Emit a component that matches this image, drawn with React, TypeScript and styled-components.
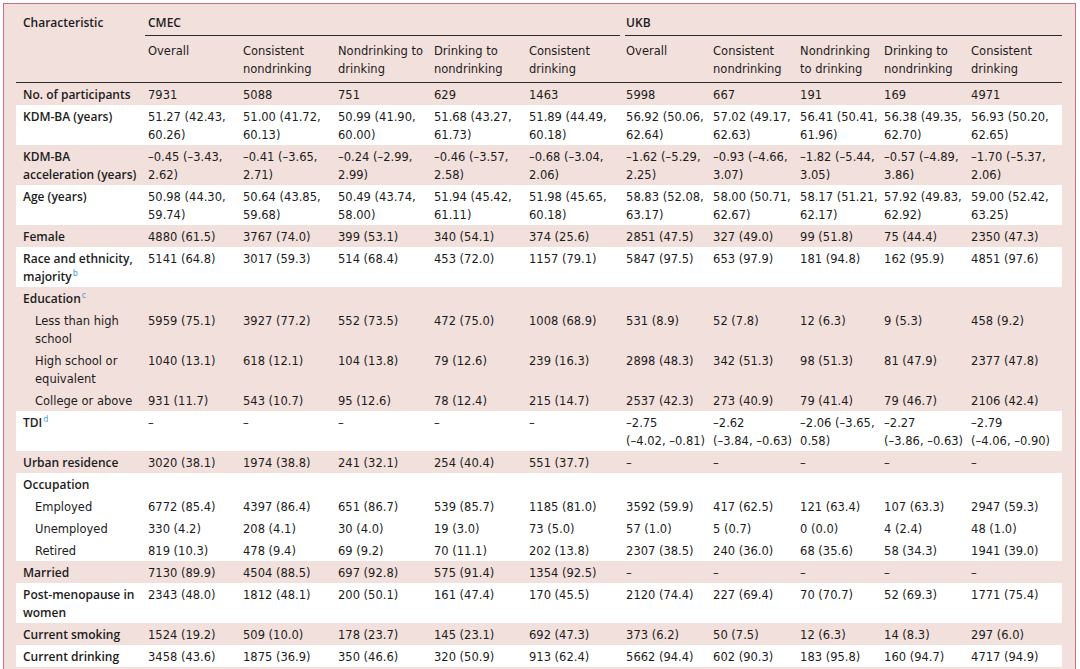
import React from "react";
import styled, { createGlobalStyle } from "styled-components";

const PINK = "#f2e0dc";
const INK = "#1c1c1c";
const RULE = "#2b2b2b";

const GlobalStyle = createGlobalStyle`
  html, body { margin: 0; padding: 0; background: #ffffff; }
  body {
    font-family: "DejaVu Sans", "Liberation Sans", sans-serif;
    color: ${INK};
  }
`;

const Frame = styled.div`
  box-sizing: border-box;
  margin: 3px 4px 0 3px;
  min-height: calc(100vh - 3px);
  padding: 5px 13px 0 12px;
  background: ${PINK};
  border: 1px solid #c9707f;
  border-bottom: none;
`;

const Table = styled.table`
  width: 1046px;
  table-layout: fixed;
  border-collapse: separate;
  border-spacing: 0;
  font-family: "DejaVu Sans", "Liberation Sans", sans-serif;
  font-size: 11.5px;
  line-height: 18px;
  color: ${INK};
`;

const Col = styled.col<{ $w: number }>`
  width: ${(p) => p.$w}px;
`;

const CharHead = styled.th`
  text-align: left;
  vertical-align: top;
  padding: 5px 0 4px 7px;
  font: 600 12px/18px "Open Sans", "DejaVu Sans", sans-serif;
  border-bottom: 1.5px solid ${RULE};
`;

const GroupHead = styled.th<{ $gap: number }>`
  text-align: left;
  vertical-align: top;
  padding: 5px 0 0 ${(p) => p.$gap}px;
  font: 600 12px/18px "Open Sans", "DejaVu Sans", sans-serif;
`;

const GroupLabel = styled.div<{ $inset: number }>`
  padding: 0 0 3px ${(p) => p.$inset}px;
  border-bottom: 1.5px solid ${RULE};
`;

const ColHead = styled.th`
  text-align: left;
  vertical-align: top;
  font-weight: 400;
  white-space: nowrap;
  padding: 6px 2px 4px 6px;
  border-bottom: 1.5px solid ${RULE};
`;

const Row = styled.tr<{ $white: boolean }>`
  background: ${(p) => (p.$white ? "#ffffff" : "transparent")};
`;

const LabelCell = styled.td<{ $bold: boolean; $indent: boolean }>`
  vertical-align: top;
  white-space: nowrap;
  padding: 3px 2px 1px ${(p) => (p.$indent ? 19 : 7)}px;
  font: ${(p) =>
    p.$bold
      ? `600 12px/18px "Open Sans", "DejaVu Sans", sans-serif`
      : `400 11.5px/18px "DejaVu Sans", sans-serif`};
`;

const ValueCell = styled.td`
  vertical-align: top;
  white-space: nowrap;
  padding: 3px 2px 1px 6px;
`;

const Note = styled.sup`
  font: 400 8px/0 "DejaVu Sans", sans-serif;
  color: #4f9ad6;
  vertical-align: 5px;
  margin-left: 1px;
`;

type RowData = {
  label: string;
  note?: string;
  bold?: boolean;
  indent?: boolean;
  white: boolean;
  values: string[];
};

const D = "–";
const dashes = [D, D, D, D, D];
const blank = ["", "", "", "", "", "", "", "", "", ""];

const rows: RowData[] = [
  {
    label: "No. of participants",
    bold: true,
    white: false,
    values: ["7931", "5088", "751", "629", "1463", "5998", "667", "191", "169", "4971"],
  },
  {
    label: "KDM-BA (years)",
    bold: true,
    white: true,
    values: [
      "51.27 (42.43,\n60.26)",
      "51.00 (41.72,\n60.13)",
      "50.99 (41.90,\n60.00)",
      "51.68 (43.27,\n61.73)",
      "51.89 (44.49,\n60.18)",
      "56.92 (50.06,\n62.64)",
      "57.02 (49.17,\n62.63)",
      "56.41 (50.41,\n61.96)",
      "56.38 (49.35,\n62.70)",
      "56.93 (50.20,\n62.65)",
    ],
  },
  {
    label: "KDM-BA\nacceleration (years)",
    bold: true,
    white: false,
    values: [
      "–0.45 (–3.43,\n2.62)",
      "–0.41 (–3.65,\n2.71)",
      "–0.24 (–2.99,\n2.99)",
      "–0.46 (–3.57,\n2.58)",
      "–0.68 (–3.04,\n2.06)",
      "–1.62 (–5.29,\n2.25)",
      "–0.93 (–4.66,\n3.07)",
      "–1.82 (–5.44,\n3.05)",
      "–0.57 (–4.89,\n3.86)",
      "–1.70 (–5.37,\n2.06)",
    ],
  },
  {
    label: "Age (years)",
    bold: true,
    white: true,
    values: [
      "50.98 (44.30,\n59.74)",
      "50.64 (43.85,\n59.68)",
      "50.49 (43.74,\n58.00)",
      "51.94 (45.42,\n61.11)",
      "51.98 (45.65,\n60.18)",
      "58.83 (52.08,\n63.17)",
      "58.00 (50.71,\n62.67)",
      "58.17 (51.21,\n62.17)",
      "57.92 (49.83,\n62.92)",
      "59.00 (52.42,\n63.25)",
    ],
  },
  {
    label: "Female",
    bold: true,
    white: false,
    values: ["4880 (61.5)", "3767 (74.0)", "399 (53.1)", "340 (54.1)", "374 (25.6)", "2851 (47.5)", "327 (49.0)", "99 (51.8)", "75 (44.4)", "2350 (47.3)"],
  },
  {
    label: "Race and ethnicity,\nmajority",
    note: "b",
    bold: true,
    white: true,
    values: ["5141 (64.8)", "3017 (59.3)", "514 (68.4)", "453 (72.0)", "1157 (79.1)", "5847 (97.5)", "653 (97.9)", "181 (94.8)", "162 (95.9)", "4851 (97.6)"],
  },
  {
    label: "Education",
    note: "c",
    bold: true,
    white: false,
    values: blank,
  },
  {
    label: "Less than high\nschool",
    indent: true,
    white: false,
    values: ["5959 (75.1)", "3927 (77.2)", "552 (73.5)", "472 (75.0)", "1008 (68.9)", "531 (8.9)", "52 (7.8)", "12 (6.3)", "9 (5.3)", "458 (9.2)"],
  },
  {
    label: "High school or\nequivalent",
    indent: true,
    white: false,
    values: ["1040 (13.1)", "618 (12.1)", "104 (13.8)", "79 (12.6)", "239 (16.3)", "2898 (48.3)", "342 (51.3)", "98 (51.3)", "81 (47.9)", "2377 (47.8)"],
  },
  {
    label: "College or above",
    indent: true,
    white: false,
    values: ["931 (11.7)", "543 (10.7)", "95 (12.6)", "78 (12.4)", "215 (14.7)", "2537 (42.3)", "273 (40.9)", "79 (41.4)", "79 (46.7)", "2106 (42.4)"],
  },
  {
    label: "TDI",
    note: "d",
    bold: true,
    white: true,
    values: [
      ...dashes,
      "–2.75\n(–4.02, –0.81)",
      "–2.62\n(–3.84, –0.63)",
      "–2.06 (–3.65,\n0.58)",
      "–2.27\n(–3.86, –0.63)",
      "–2.79\n(–4.06, –0.90)",
    ],
  },
  {
    label: "Urban residence",
    bold: true,
    white: false,
    values: ["3020 (38.1)", "1974 (38.8)", "241 (32.1)", "254 (40.4)", "551 (37.7)", ...dashes],
  },
  {
    label: "Occupation",
    bold: true,
    white: true,
    values: blank,
  },
  {
    label: "Employed",
    indent: true,
    white: true,
    values: ["6772 (85.4)", "4397 (86.4)", "651 (86.7)", "539 (85.7)", "1185 (81.0)", "3592 (59.9)", "417 (62.5)", "121 (63.4)", "107 (63.3)", "2947 (59.3)"],
  },
  {
    label: "Unemployed",
    indent: true,
    white: true,
    values: ["330 (4.2)", "208 (4.1)", "30 (4.0)", "19 (3.0)", "73 (5.0)", "57 (1.0)", "5 (0.7)", "0 (0.0)", "4 (2.4)", "48 (1.0)"],
  },
  {
    label: "Retired",
    indent: true,
    white: true,
    values: ["819 (10.3)", "478 (9.4)", "69 (9.2)", "70 (11.1)", "202 (13.8)", "2307 (38.5)", "240 (36.0)", "68 (35.6)", "58 (34.3)", "1941 (39.0)"],
  },
  {
    label: "Married",
    bold: true,
    white: false,
    values: ["7130 (89.9)", "4504 (88.5)", "697 (92.8)", "575 (91.4)", "1354 (92.5)", ...dashes],
  },
  {
    label: "Post-menopause in\nwomen",
    bold: true,
    white: true,
    values: ["2343 (48.0)", "1812 (48.1)", "200 (50.1)", "161 (47.4)", "170 (45.5)", "2120 (74.4)", "227 (69.4)", "70 (70.7)", "52 (69.3)", "1771 (75.4)"],
  },
  {
    label: "Current smoking",
    bold: true,
    white: false,
    values: ["1524 (19.2)", "509 (10.0)", "178 (23.7)", "145 (23.1)", "692 (47.3)", "373 (6.2)", "50 (7.5)", "12 (6.3)", "14 (8.3)", "297 (6.0)"],
  },
  {
    label: "Current drinking",
    bold: true,
    white: true,
    values: ["3458 (43.6)", "1875 (36.9)", "350 (46.6)", "320 (50.9)", "913 (62.4)", "5662 (94.4)", "602 (90.3)", "183 (95.8)", "160 (94.7)", "4717 (94.9)"],
  },
];

const colWidths = [126, 95, 95, 96, 95, 97, 87, 87, 84, 87, 97];

const cmecHeads = ["Overall", "Consistent\nnondrinking", "Nondrinking to\ndrinking", "Drinking to\nnondrinking", "Consistent\ndrinking"];
const ukbHeads = ["Overall", "Consistent\nnondrinking", "Nondrinking\nto drinking", "Drinking to\nnondrinking", "Consistent\ndrinking"];

function Lines({ text }: { text: string }) {
  const parts = text.split("\n");
  return (
    <>
      {parts.map((p, i) => (
        <React.Fragment key={i}>
          {i > 0 && <br />}
          {p}
        </React.Fragment>
      ))}
    </>
  );
}

export default function App() {
  return (
    <>
      <GlobalStyle />
      <Frame>
        <Table>
          <colgroup>
            {colWidths.map((w, i) => (
              <Col key={i} $w={w} />
            ))}
          </colgroup>
          <thead>
            <tr>
              <CharHead rowSpan={2}>Characteristic</CharHead>
              <GroupHead colSpan={5} $gap={3}>
                <GroupLabel $inset={3}>CMEC</GroupLabel>
              </GroupHead>
              <GroupHead colSpan={5} $gap={5}>
                <GroupLabel $inset={1}>UKB</GroupLabel>
              </GroupHead>
            </tr>
            <tr>
              {[...cmecHeads, ...ukbHeads].map((h, i) => (
                <ColHead key={i}>
                  <Lines text={h} />
                </ColHead>
              ))}
            </tr>
          </thead>
          <tbody>
            {rows.map((r, i) => (
              <Row key={i} $white={r.white}>
                <LabelCell $bold={!!r.bold} $indent={!!r.indent}>
                  <Lines text={r.label} />
                  {r.note && <Note>{r.note}</Note>}
                </LabelCell>
                {r.values.map((v, j) => (
                  <ValueCell key={j}>
                    <Lines text={v} />
                  </ValueCell>
                ))}
              </Row>
            ))}
          </tbody>
        </Table>
      </Frame>
    </>
  );
}
